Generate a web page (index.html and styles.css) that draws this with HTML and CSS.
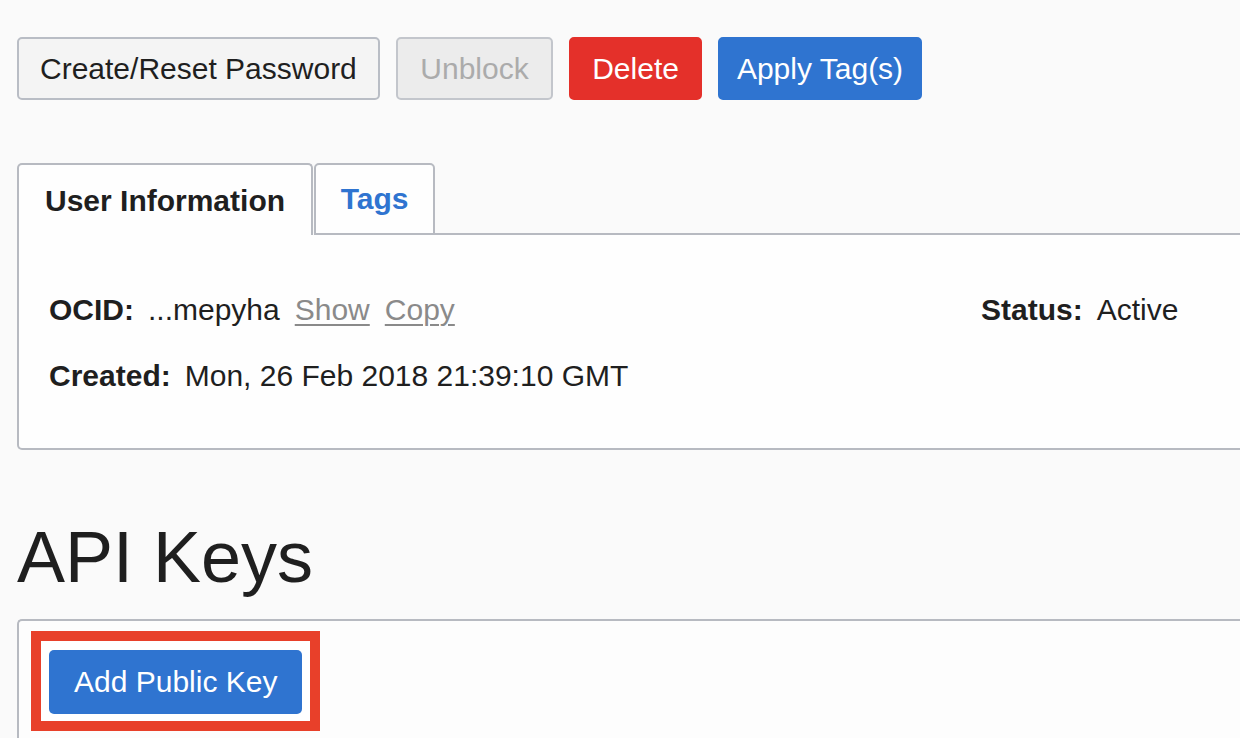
FILE: index.html
```html
<!DOCTYPE html>
<html>
<head>
<meta charset="utf-8">
<link rel="stylesheet" href="styles.css">
</head>
<body>
<div class="page">
  <div class="toolbar">
    <button class="btn btn-default">Create/Reset Password</button>
    <button class="btn btn-disabled">Unblock</button>
    <button class="btn btn-danger">Delete</button>
    <button class="btn btn-primary btn-apply">Apply Tag(s)</button>
  </div>

  <div class="tabs">
    <div class="tab tab-active">User Information</div>
    <div class="tab tab-link">Tags</div>
    <div class="tab-fill"></div>
  </div>
  <div class="panel">
    <div class="info-grid">
      <div class="field">
        <span class="label">OCID:</span>
        <span class="value">...mepyha</span>
        <a class="link">Show</a>
        <a class="link">Copy</a>
      </div>
      <div class="field">
        <span class="label">Status:</span>
        <span class="value">Active</span>
      </div>
      <div class="field">
        <span class="label">Created:</span>
        <span class="value">Mon, 26 Feb 2018 21:39:10 GMT</span>
      </div>
    </div>
  </div>

  <h1 class="section-title">API Keys</h1>
  <div class="panel2">
    <div class="highlight">
      <button class="btn btn-primary btn-add">Add Public Key</button>
    </div>
  </div>
</div>
</body>
</html>
```

FILE: styles.css
```css
html, body {
  margin: 0;
  padding: 0;
  background: #fafafa;
  overflow: hidden;
}
body {
  font-family: "Liberation Sans", Arial, Helvetica, sans-serif;
  font-size: 30px;
  color: #1f1f1f;
}
.page {
  width: 1300px;
  padding: 37px 0 0 17px;
}
.toolbar {
  display: flex;
  gap: 16px;
}
.btn {
  font-family: inherit;
  font-size: 30px;
  height: 63px;
  padding: 0 21px;
  border: 2px solid #b9bdc5;
  border-radius: 5px;
  background: #f4f4f4;
  color: #1f1f1f;
  line-height: 1;
}
.btn-disabled {
  background: #ececec;
  color: #ababab;
  border-color: #c3c6cc;
  padding: 0 22.5px;
}
.btn-danger {
  background: #e4302a;
  border-color: #e4302a;
  color: #fff;
}
.btn-primary {
  background: #2f74d0;
  border-color: #2f74d0;
  color: #fff;
}
.btn-apply {
  padding: 0 17px;
}
.tabs {
  display: flex;
  margin-top: 63px;
  height: 72px;
}
.tab {
  box-sizing: border-box;
  height: 72px;
  padding: 0 26px;
  display: flex;
  align-items: center;
  font-weight: bold;
  border: 2px solid #b7bac1;
  border-radius: 5px 5px 0 0;
  background: #fefefe;
}
.tab-active {
  border-bottom: none;
  color: #1f1f1f;
  padding-top: 2px;
}
.tab-link {
  color: #2f74d0;
  width: 121px;
  justify-content: center;
  padding: 0;
  margin-left: 1px;
}
.tab-fill {
  flex: 1;
  border-bottom: 2px solid #b7bac1;
}
.panel {
  border: 2px solid #b7bac1;
  border-top: none;
  border-radius: 0 0 5px 5px;
  background: #fefefe;
  padding: 57px 30px 54px 30px;
}
.info-grid {
  display: grid;
  grid-template-columns: 932px 1fr;
  row-gap: 30px;
}
.field {
  display: flex;
  gap: 14px;
  line-height: 36px;
  white-space: nowrap;
}
.label {
  font-weight: bold;
}
.link {
  color: #8a8a8a;
  text-decoration: underline;
  text-decoration-thickness: 2px;
  text-underline-offset: 4px;
  margin-left: 1px;
}
.section-title {
  font-size: 72px;
  font-weight: normal;
  line-height: 83px;
  margin: 66px 0 20px 0;
  color: #1f1f1f;
}
.panel2 {
  border: 2px solid #b7bac1;
  border-right: none;
  border-radius: 5px 0 0 0;
  background: #fdfdfd;
  padding: 10px 0 0 12px;
  height: 200px;
}
.highlight {
  display: inline-block;
  border: 10px solid #e8402a;
  background: #fff;
  padding: 9px 8px 7px 8px;
}
.btn-add {
  height: 64px;
  padding: 0 25px;
  border: none;
  border-radius: 5px;
  display: block;
}
```
